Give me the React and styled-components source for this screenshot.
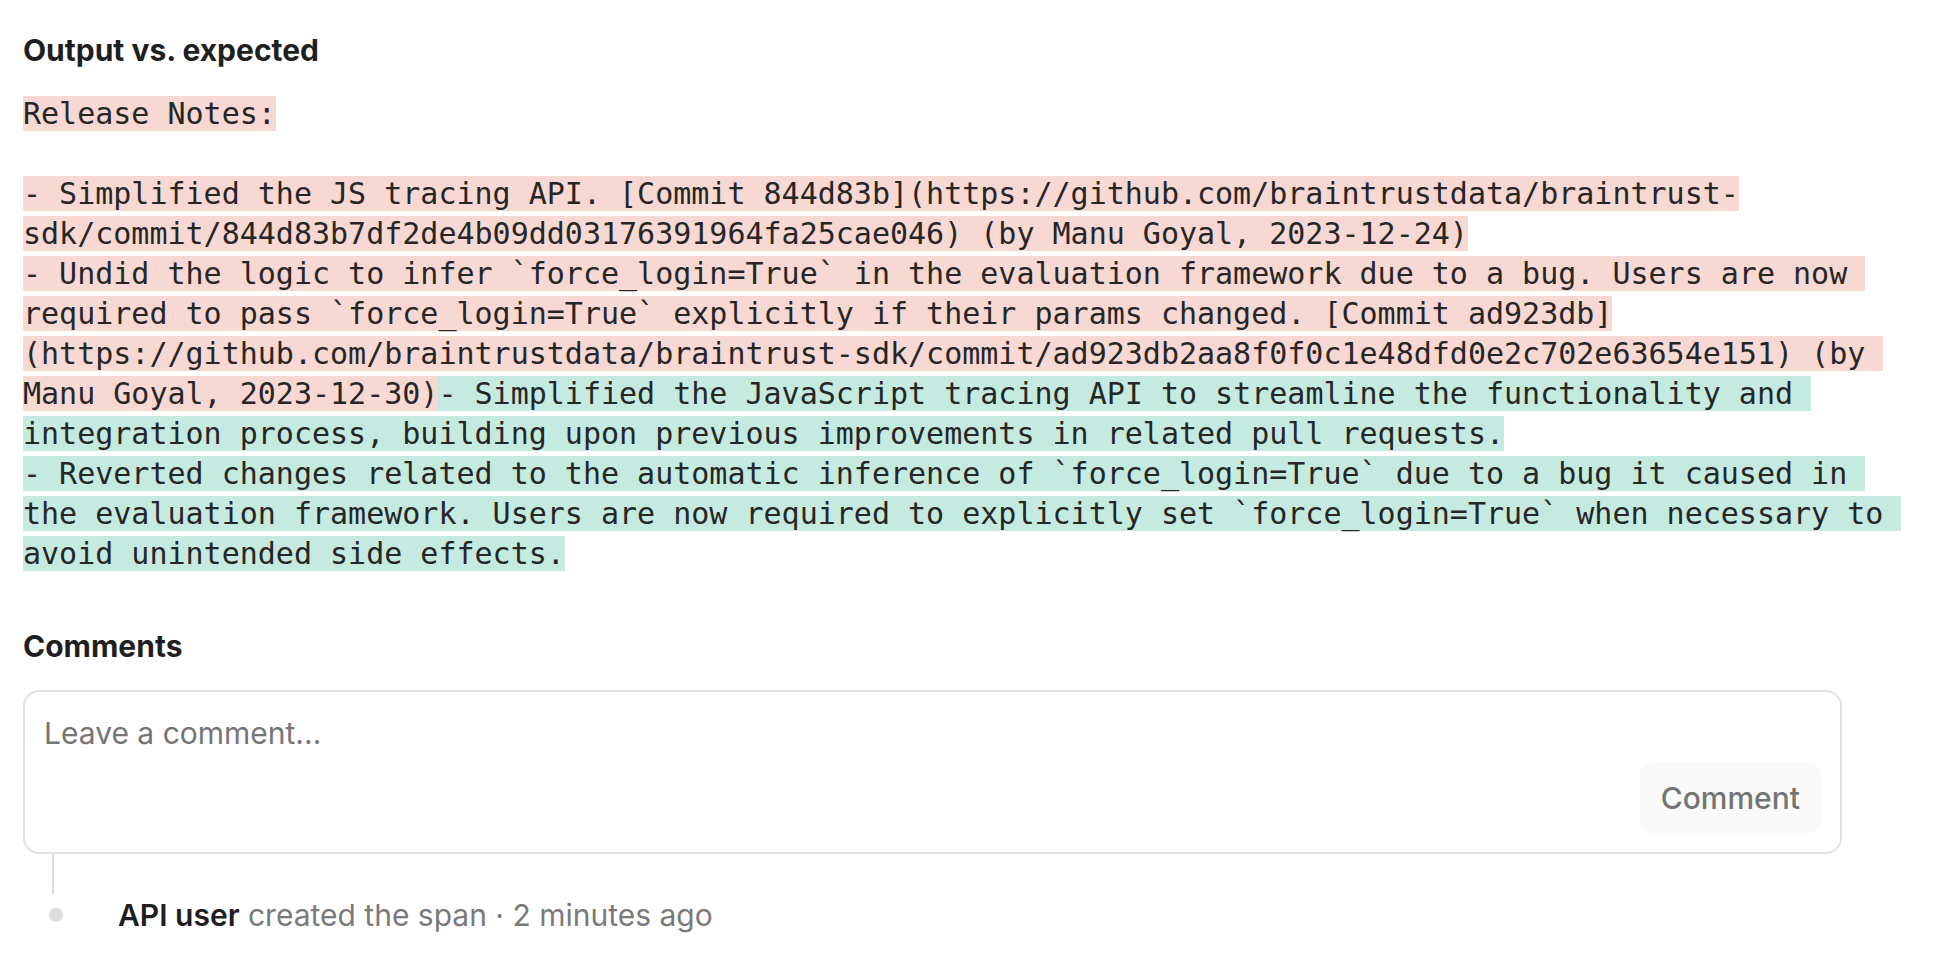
import styled, { createGlobalStyle } from 'styled-components'

const GlobalStyle = createGlobalStyle`
  html, body {
    margin: 0;
    padding: 0;
    background: #FFFFFF;
  }

  body {
    font-family: Inter, "Noto Sans", "Liberation Sans", sans-serif;
    color: #222222;
  }
`

const Page = styled.div`
  padding: 32px 40px 40px 23px;
  box-sizing: border-box;
  width: 100%;
`

const SectionTitle = styled.h2`
  margin: 0;
  font-size: 30px;
  line-height: 36px;
  font-weight: 700;
  color: #1f1f1f;
`

const DiffBlock = styled.pre`
  margin: 26px 0 0 0;
  font-family: "DejaVu Sans Mono", "Liberation Mono", monospace;
  font-size: 30px;
  line-height: 40px;
  color: #262626;
  white-space: pre-wrap;
  word-break: normal;
`

const Chunk = styled.span`
  background: ${p => (p.$added ? '#c5ebe1' : '#f7d8d2')};
`

const CommentsTitle = styled(SectionTitle)`
  margin-top: 54px;
`

const CommentBox = styled.div`
  margin-top: 26px;
  margin-right: 60px;
  border: 2px solid #e1e1e1;
  border-radius: 16px;
  padding: 23px 19px 19px 19px;
  display: flex;
  flex-direction: column;
`

const CommentInput = styled.textarea`
  height: 48px;
  border: none;
  outline: none;
  resize: none;
  padding: 0;
  margin: 0;
  font-family: Inter, "Noto Sans", sans-serif;
  font-size: 30px;
  line-height: 36px;
  color: #222222;
  background: transparent;

  ::placeholder {
    color: #8a908d;
  }
`

const Actions = styled.div`
  display: flex;
  justify-content: flex-end;
`

const CommentBtn = styled.button`
  height: 70px;
  padding: 0 21px;
  border: none;
  border-radius: 12px;
  background: #fafafa;
  font-family: Inter, "Noto Sans", sans-serif;
  font-size: 30px;
  font-weight: 500;
  color: #747474;
  cursor: pointer;
`

const Connector = styled.div`
  width: 2px;
  height: 40px;
  margin-left: 29px;
  background: #dedede;
`

const ActivityRow = styled.div`
  display: flex;
  align-items: center;
  height: 42px;
`

const Dot = styled.span`
  width: 14px;
  height: 14px;
  border-radius: 50%;
  background: #dcdcdc;
  margin-left: 26px;
  flex-shrink: 0;
`

const ActivityText = styled.div`
  margin-left: 55px;
  font-size: 30px;
  line-height: 36px;
  color: #7a7a7a;
`

const Actor = styled.span`
  font-weight: 600;
  color: #1f1f1f;
`

const output = `Release Notes:

- Simplified the JS tracing API. [Commit 844d83b](https://github.com/braintrustdata/braintrust-sdk/commit/844d83b7df2de4b09dd03176391964fa25cae046) (by Manu Goyal, 2023-12-24)
- Undid the logic to infer \`force_login=True\` in the evaluation framework due to a bug. Users are now required to pass \`force_login=True\` explicitly if their params changed. [Commit ad923db](https://github.com/braintrustdata/braintrust-sdk/commit/ad923db2aa8f0f0c1e48dfd0e2c702e63654e151) (by Manu Goyal, 2023-12-30)`

const expected = `- Simplified the JavaScript tracing API to streamline the functionality and integration process, building upon previous improvements in related pull requests.
- Reverted changes related to the automatic inference of \`force_login=True\` due to a bug it caused in the evaluation framework. Users are now required to explicitly set \`force_login=True\` when necessary to avoid unintended side effects.`

const App = () => {
  return (
    <Page>
      <GlobalStyle />
      <SectionTitle>Output vs. expected</SectionTitle>
      <DiffBlock>
        <Chunk>{output}</Chunk>
        <Chunk $added>{expected}</Chunk>
      </DiffBlock>

      <CommentsTitle>Comments</CommentsTitle>
      <CommentBox>
        <CommentInput placeholder="Leave a comment..." />
        <Actions>
          <CommentBtn>Comment</CommentBtn>
        </Actions>
      </CommentBox>

      <Connector />
      <ActivityRow>
        <Dot />
        <ActivityText>
          <Actor>API user</Actor> created the span · 2 minutes ago
        </ActivityText>
      </ActivityRow>
    </Page>
  )
}

export default App
